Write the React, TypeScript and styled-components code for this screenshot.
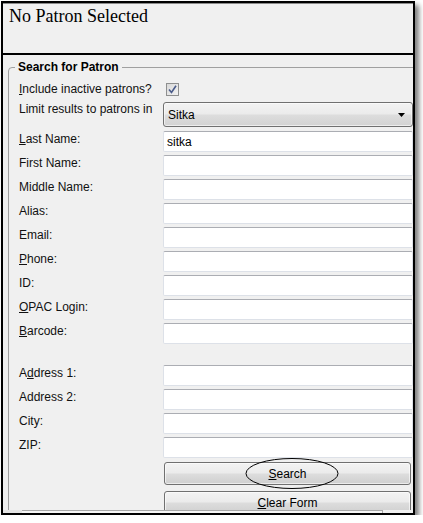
import React from 'react';
import styled, { createGlobalStyle } from 'styled-components';

const GlobalStyle = createGlobalStyle`
  html, body {
    margin: 0;
    padding: 0;
    background: #ffffff;
  }
  body {
    font-family: "Liberation Sans", Arial, sans-serif;
  }
`;

const Window = styled.div`
  margin: 1px 0 0 1px;
  width: 410px;
  height: 510px;
  border: 2px solid #000;
  background: #f0f0f0;
  box-shadow: 4px 4px 5px rgba(0, 0, 0, 0.5);
  display: flex;
  flex-direction: column;
  overflow: hidden;
`;

const Header = styled.div`
  box-sizing: border-box;
  height: 52px;
  flex: none;
  border-top: 1px solid #8a8a8a;
  border-bottom: 2px solid #000;
  padding: 2px 0 0 6px;
`;

const Title = styled.h1`
  margin: 0;
  font-family: "Liberation Serif", "Times New Roman", serif;
  font-weight: normal;
  font-size: 18px;
  line-height: 21px;
  color: #000;
`;

const Body = styled.div`
  flex: 1;
  min-height: 0;
  overflow: hidden;
`;

const Group = styled.fieldset`
  margin: 5px -20px 0 5px;
  padding: 9px 0 20px 10px;
  border: 1px solid #a0a0a0;
  border-radius: 4px;
  min-width: 0;
`;

const Legend = styled.legend`
  font-weight: bold;
  font-size: 12px;
  line-height: 14px;
  color: #000;
  padding: 0 3px;
  margin-left: -4px;
`;

const Row = styled.div<{ $gap?: number; $h: number }>`
  display: grid;
  grid-template-columns: 144px 250px;
  height: ${p => p.$h}px;
  margin-top: ${p => p.$gap ?? 3}px;
`;

const Label = styled.label<{ $pt?: number; $lh?: number }>`
  font-size: 12px;
  line-height: ${p => p.$lh ?? 15}px;
  padding-top: ${p => p.$pt ?? 1}px;
  color: #111;
  white-space: nowrap;
`;

const Key = styled.span`
  text-decoration: underline;
`;

const Check = styled.span`
  box-sizing: border-box;
  margin-left: 3px;
  width: 13px;
  height: 13px;
  border: 1px solid #8e8f8f;
  background: linear-gradient(135deg, #d8d8d8 0%, #f2f2f2 100%);
  display: flex;
  align-items: center;
  justify-content: center;
`;

const Dropdown = styled.div`
  box-sizing: border-box;
  height: 25px;
  border: 1px solid #707070;
  border-radius: 3px;
  background: linear-gradient(#f3f3f3 0%, #ebebeb 48%, #dddddd 52%, #d2d2d2 100%);
  box-shadow: inset 0 0 0 1px rgba(255, 255, 255, 0.6);
  display: flex;
  align-items: center;
  justify-content: space-between;
  padding: 0 7px 0 4px;
  font-size: 12px;
  color: #000;
`;

const TextBox = styled.input`
  box-sizing: border-box;
  width: 250px;
  height: 21px;
  margin: 0;
  border: 1px solid #dde1e8;
  border-top-color: #abadb3;
  border-radius: 2px;
  background: #fff;
  padding: 0 3px;
  font-family: "Liberation Sans", Arial, sans-serif;
  font-size: 12px;
  color: #000;
  outline: none;
`;

const ButtonWrap = styled.div`
  position: relative;
  margin-left: 1px;
  width: 247px;
`;

const Button = styled.button`
  box-sizing: border-box;
  width: 247px;
  height: 23px;
  margin: 0;
  border: 1px solid #707070;
  border-radius: 3px;
  background: linear-gradient(#f3f3f3 0%, #ebebeb 48%, #dddddd 52%, #cfcfcf 100%);
  box-shadow: inset 0 0 0 1px rgba(255, 255, 255, 0.6);
  font-family: "Liberation Sans", Arial, sans-serif;
  font-size: 12px;
  color: #000;
  padding: 0;
`;

const Circle = styled.svg`
  position: absolute;
  left: 81px;
  top: -5px;
  pointer-events: none;
`;

const ScrollStrip = styled.div`
  flex: none;
  height: 3px;
  display: flex;
  background: #f0f0f0;
`;

const StripLead = styled.div`
  width: 19px;
  background: #e4e4e4;
`;

const StripThumb = styled.div`
  width: 360px;
  border-top: 1px solid #a8a8a8;
  border-right: 1px solid #a8a8a8;
  background: #f6f6f6;
`;

const fields: { label: React.ReactNode; value?: string; gap?: number }[] = [
  { label: <><Key>L</Key>ast Name:</>, value: 'sitka', gap: 4 },
  { label: 'First Name:' },
  { label: 'Middle Name:' },
  { label: 'Alias:' },
  { label: 'Email:' },
  { label: <><Key>P</Key>hone:</> },
  { label: 'ID:' },
  { label: <><Key>O</Key>PAC Login:</> },
  { label: <><Key>B</Key>arcode:</> },
  { label: <>A<Key>d</Key>dress 1:</>, gap: 21 },
  { label: 'Address 2:' },
  { label: 'City:' },
  { label: 'ZIP:' },
];

export default function App() {
  return (
    <>
      <GlobalStyle />
      <Window>
        <Header>
          <Title>No Patron Selected</Title>
        </Header>
        <Body>
          <Group>
            <Legend>Search for Patron</Legend>
            <Row $h={13} $gap={0}>
              <Label $pt={0} $lh={13}><Key>I</Key>nclude inactive patrons?</Label>
              <Check>
                <svg width="9" height="9" viewBox="0 0 9 9">
                  <path d="M1 4.5 L3.5 7.5 L8 0.8" fill="none" stroke="#4a5b8a" strokeWidth="1.6" />
                </svg>
              </Check>
            </Row>
            <Row $h={25} $gap={6}>
              <Label $pt={0} $lh={14}>Limit results to patrons in</Label>
              <Dropdown>
                <span>Sitka</span>
                <svg width="7" height="4" viewBox="0 0 7 4">
                  <path d="M0 0 H7 L3.5 4 Z" fill="#000" />
                </svg>
              </Dropdown>
            </Row>
            {fields.map((f, i) => (
              <Row key={i} $h={21} $gap={f.gap}>
                <Label>{f.label}</Label>
                <TextBox defaultValue={f.value ?? ''} />
              </Row>
            ))}
            <Row $h={23} $gap={4}>
              <span />
              <ButtonWrap>
                <Button><Key>S</Key>earch</Button>
                <Circle width="95" height="33" viewBox="0 0 95 33">
                  <ellipse cx="47" cy="16.5" rx="46" ry="15" fill="none" stroke="#000" strokeWidth="1" />
                </Circle>
              </ButtonWrap>
            </Row>
            <Row $h={23} $gap={6}>
              <span />
              <ButtonWrap>
                <Button><Key>C</Key>lear Form</Button>
              </ButtonWrap>
            </Row>
          </Group>
        </Body>
        <ScrollStrip>
          <StripLead />
          <StripThumb />
        </ScrollStrip>
      </Window>
    </>
  );
}
